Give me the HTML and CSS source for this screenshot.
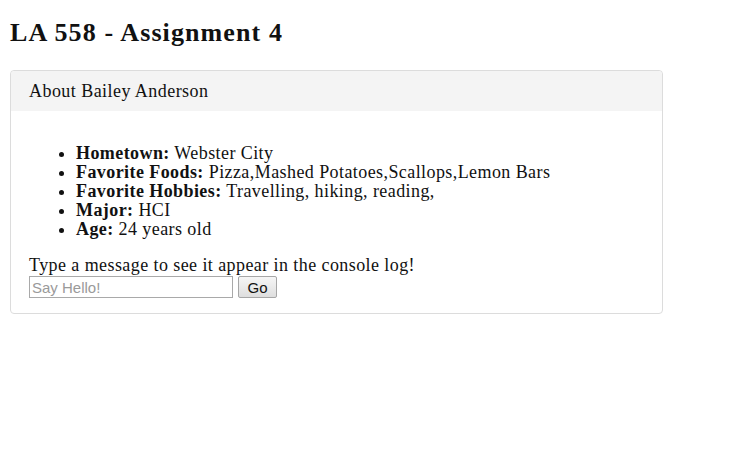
FILE: index.html
```html
<!DOCTYPE html>
<html>
<head>
<meta charset="utf-8">
<link rel="stylesheet" href="styles.css">
</head>
<body>
<h1 class="title">LA 558 - Assignment 4</h1>
<div class="panel">
  <div class="panel-heading">About Bailey Anderson</div>
  <div class="panel-body">
    <ul class="facts">
      <li><b>Hometown:</b> Webster City</li>
      <li><b>Favorite Foods:</b> Pizza,Mashed Potatoes,Scallops,Lemon Bars</li>
      <li><b>Favorite Hobbies:</b> Travelling, hiking, reading,</li>
      <li><b>Major:</b> HCI</li>
      <li><b>Age:</b> 24 years old</li>
    </ul>
    <div class="prompt">Type a message to see it appear in the console log!</div>
    <div class="form-row">
      <input class="msg" type="text" placeholder="Say Hello!">
      <button class="go">Go</button>
    </div>
  </div>
</div>
</body>
</html>
```
FILE: styles.css
```css
body {
  margin: 0;
  padding: 10px;
  font-family: "Liberation Serif", "Times New Roman", serif;
  color: #111;
  background: #fff;
}
.title {
  font-size: 26px;
  letter-spacing: 1.1px;
  font-weight: bold;
  margin: 8px 0 22px 0;
  line-height: 30px;
}
.panel {
  width: 651px;
  border: 1px solid #dcdcdc;
  border-radius: 4px;
}
.panel-heading {
  background: #f4f4f4;
  height: 40px;
  line-height: 40px;
  padding: 0 18px;
  font-size: 18px;
  letter-spacing: 0.45px;
  border-radius: 4px 4px 0 0;
}
.panel-body {
  padding: 33px 18px 15px 18px;
  font-size: 18px;
  letter-spacing: 0.42px;
}
.facts {
  margin: 0 0 17px 0;
  padding-left: 47px;
  line-height: 19px;
}
.prompt {
  line-height: 19px;
  margin-bottom: 1px;
}
.form-row {
  display: flex;
  gap: 5px;
  align-items: center;
  letter-spacing: 0;
}
.msg {
  width: 204px;
  height: 22px;
  box-sizing: border-box;
  border: 1px solid #a9a9a9;
  padding: 1px 2px;
  font-family: "Liberation Sans", Arial, sans-serif;
  font-size: 15px;
  margin: 0;
}
.msg::placeholder {
  color: #9a9a9a;
}
.go {
  width: 39px;
  height: 22px;
  box-sizing: border-box;
  padding: 0;
  font-family: "Liberation Sans", Arial, sans-serif;
  font-size: 15px;
  color: #111;
  background: linear-gradient(#f6f6f6, #dedede);
  border: 1px solid #a6a6a6;
  border-radius: 2px;
  margin: 0;
}
```
